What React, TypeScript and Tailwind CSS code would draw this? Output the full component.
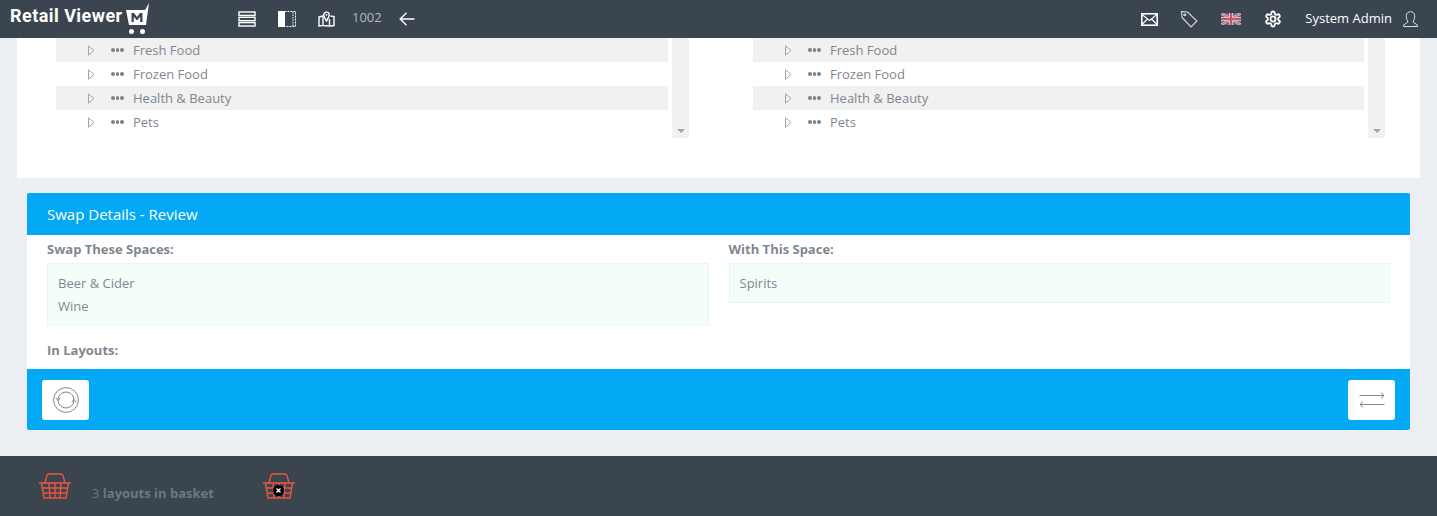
import React from 'react';

const treeItems = ['Fresh Food', 'Frozen Food', 'Health & Beauty', 'Pets'];

const TreeColumn: React.FC<{ ml: string; w: string }> = ({ ml, w }) => (
  <div className={`flex ${ml}`}>
    <div className={`${w} h-[96px]`}>
      {treeItems.map((item, i) => (
        <div key={item} className={`h-6 flex items-center pl-[32px] ${i % 2 === 0 ? 'bg-[#f1f1f1]' : 'bg-white'}`}>
          <svg width="7" height="11" viewBox="0 0 7 11" className="shrink-0">
            <path d="M0.5 0.8 L6 5.5 L0.5 10.2 Z" fill="none" stroke="#a3a3a3" strokeWidth="1" />
          </svg>
          <span className="ml-[16px] flex gap-[1px] shrink-0">
            <i className="block w-[3.5px] h-[3.5px] rounded-full bg-[#7b8089]" />
            <i className="block w-[3.5px] h-[3.5px] rounded-full bg-[#7b8089]" />
            <i className="block w-[3.5px] h-[3.5px] rounded-full bg-[#7b8089]" />
          </span>
          <span className="ml-[9.5px] pt-[2px] text-[13px] text-[#7f8790]">{item}</span>
        </div>
      ))}
    </div>
    <div className="ml-1 w-[17px] h-[100px] bg-[#f1f1f1] flex items-end justify-center pb-[5px]">
      <div className="w-0 h-0 border-x-[4px] border-x-transparent border-t-[4px] border-t-[#a3a3a3]" />
    </div>
  </div>
);

const Basket: React.FC<{ remove?: boolean }> = ({ remove }) => (
  <span className="relative block w-8 h-[26px]">
    <svg width="32" height="26" viewBox="0 0 32 26" fill="none" stroke="#ea5440" strokeWidth="1.4">
      <path d="M6 10 L8 2.5 Q8.4 1 10 1 H22 Q23.6 1 24 2.5 L26 10" />
      <path d="M0 10 H32" strokeWidth="1.6" />
      <path d="M2.5 10 L5 25 H27 L29.5 10" strokeWidth="1.5" />
      <path d="M3.3 15 H28.7 M4.2 20 H27.8 M10 10 L11 25 M16 10 V25 M22 10 L21 25" />
    </svg>
    {remove && (
      <span className="absolute left-[10px] top-[12px] w-[11px] h-[11px] rounded-full bg-black flex items-center justify-center">
        <svg width="5" height="5" viewBox="0 0 5 5" stroke="#fff" strokeWidth="1.4">
          <path d="M0.5 0.5 L4.5 4.5 M4.5 0.5 L0.5 4.5" />
        </svg>
      </span>
    )}
  </span>
);

export default function App() {
  return (
    <div className="w-[1437px] h-[516px] overflow-hidden bg-[#ebeef3] font-['Open_Sans',sans-serif] flex flex-col">
      <header className="h-[38px] shrink-0 bg-[#3a4550] flex items-center text-white">
        <div className="relative w-[150px] ml-[10px] h-[38px] flex items-center">
          <span className="font-['Roboto',sans-serif] text-[18px] font-bold leading-none whitespace-nowrap tracking-[0.45px] -mt-[6px]">Retail Viewer</span>
          <svg className="absolute left-[115px] top-[2px]" width="26" height="33" viewBox="0 0 26 33">
            <path d="M1 8 H20 L24 1 L21 23 H4 Z" fill="#fff" />
            <path d="M6.5 20 V11 H9 L12 15 L15 11 H17.5 V20 H15.2 V14.8 L12 18.5 L8.8 14.8 V20 Z" fill="#3a4550" />
            <circle cx="6.5" cy="29.5" r="2.5" fill="#fff" />
            <circle cx="17.5" cy="29.5" r="2.5" fill="#fff" />
          </svg>
        </div>
        <div className="ml-[78px] flex items-center">
          <svg width="18" height="16" viewBox="0 0 18 16" fill="none" stroke="#fff" strokeWidth="1.4">
            <rect x="1" y="1" width="16" height="3.4" />
            <rect x="1" y="6.3" width="16" height="3.4" />
            <rect x="1" y="11.6" width="16" height="3.4" />
          </svg>
          <svg className="ml-[22px]" width="18" height="16" viewBox="0 0 18 16" fill="none" stroke="#fff" strokeWidth="1">
            <rect x="0.5" y="0.5" width="6" height="15" fill="#fff" />
            <rect x="6.5" y="0.5" width="11" height="15" strokeDasharray="2 1" />
            <path d="M15 1 V15" strokeDasharray="1.5 1" />
          </svg>
          <svg className="ml-[22px]" width="17" height="16" viewBox="0 0 17 16" fill="none" stroke="#fff" strokeWidth="1.4">
            <path d="M1 6 L5 5 V14.5 L1 15 Z M5 14.5 L11.5 15 V8 M11.5 15 L16 14.5 V5.5 L12.5 5" />
            <path d="M8.5 10 C6.5 7 5.8 5.5 5.8 3.8 A2.7 2.7 0 0 1 11.2 3.8 C11.2 5.5 10.5 7 8.5 10 Z" />
            <circle cx="8.5" cy="3.8" r="0.9" fill="#fff" stroke="none" />
          </svg>
          <span className="ml-[17px] text-[13px] text-[#b4b9bf] -mt-[2px]">1002</span>
          <svg className="ml-[17px]" width="16" height="14" viewBox="0 0 16 14" fill="none" stroke="#fff" strokeWidth="1.4">
            <path d="M15.5 7 H1.2 M7.5 0.8 L1.2 7 L7.5 13.2" />
          </svg>
        </div>
        <div className="ml-auto flex items-center pr-[19px]">
          <svg width="17" height="13" viewBox="0 0 17 13" fill="none" stroke="#fff">
            <rect x="0.8" y="0.8" width="15.4" height="11.4" strokeWidth="1.6" />
            <path d="M1 1.5 L8.5 7.5 L16 1.5 M1 11.5 L6.5 6 M16 11.5 L10.5 6" strokeWidth="1.1" />
          </svg>
          <svg className="ml-[22px]" width="18" height="18" viewBox="0 0 18 18" fill="none" stroke="#d9dcdf" strokeWidth="1.1">
            <path d="M1.5 1.5 L7.5 2 L17 11 L11 17 L2 7.5 Z" />
            <circle cx="4.8" cy="4.8" r="1" />
          </svg>
          <svg className="ml-[23px]" width="20" height="12" viewBox="0 0 20 12">
            <rect width="20" height="12" fill="#5a6794" />
            <path d="M0 0 L20 12 M20 0 L0 12" stroke="#d8c9d2" strokeWidth="2.4" />
            <path d="M0 0 L20 12 M20 0 L0 12" stroke="#c9535f" strokeWidth="1" />
            <path d="M10 0 V12 M0 6 H20" stroke="#e3d6dc" strokeWidth="4.2" />
            <path d="M10 0 V12 M0 6 H20" stroke="#c9535f" strokeWidth="2.4" />
          </svg>
          <svg className="ml-[23px]" width="18" height="18" viewBox="0 0 24 24" fill="none" stroke="#fff" strokeWidth="2.4">
            <path d="M12.22 2h-.44a2 2 0 0 0-2 2v.18a2 2 0 0 1-1 1.73l-.43.25a2 2 0 0 1-2 0l-.15-.08a2 2 0 0 0-2.73.73l-.22.38a2 2 0 0 0 .73 2.73l.15.1a2 2 0 0 1 1 1.72v.51a2 2 0 0 1-1 1.74l-.15.09a2 2 0 0 0-.73 2.73l.22.38a2 2 0 0 0 2.73.73l.15-.08a2 2 0 0 1 2 0l.43.25a2 2 0 0 1 1 1.73V20a2 2 0 0 0 2 2h.44a2 2 0 0 0 2-2v-.18a2 2 0 0 1 1-1.73l.43-.25a2 2 0 0 1 2 0l.15.08a2 2 0 0 0 2.73-.73l.22-.39a2 2 0 0 0-.73-2.73l-.15-.08a2 2 0 0 1-1-1.74v-.5a2 2 0 0 1 1-1.74l.15-.09a2 2 0 0 0 .73-2.73l-.22-.38a2 2 0 0 0-2.73-.73l-.15.08a2 2 0 0 1-2 0l-.43-.25a2 2 0 0 1-1-1.73V4a2 2 0 0 0-2-2z" />
            <circle cx="12" cy="12" r="3.4" />
          </svg>
          <span className="ml-[23px] text-[13px] text-white">System Admin</span>
          <svg className="ml-[11px]" width="15" height="16" viewBox="0 0 16 17" fill="none" stroke="#e6e8ea" strokeWidth="1">
            <path d="M5 10.5 C3.5 8.5 3.5 6.5 3.5 5 A4.5 4.3 0 0 1 12.5 5 C12.5 6.5 12.5 8.5 11 10.5 L11 12 L15.5 15 V16.5 H0.5 V15 L5 12 Z" />
          </svg>
        </div>
      </header>

      <section className="mx-[17px] w-[1403px] h-[140px] shrink-0 bg-white flex">
        <TreeColumn ml="ml-[39px]" w="w-[612px]" />
        <TreeColumn ml="ml-[64px]" w="w-[611px]" />
      </section>

      <section className="mt-[15px] mx-[27px] w-[1383px] h-[237px] shrink-0 rounded-[2px] bg-white flex flex-col overflow-hidden">
        <div className="h-[42px] shrink-0 bg-[#03a9f4] flex items-center px-5 text-[15px] text-white">Swap Details - Review</div>
        <div className="flex-1 px-5 text-[13px] text-[#7f8790]">
          <div className="grid grid-cols-2 gap-x-5 items-start">
            <div>
              <div className="h-[28px] pt-[2px] flex items-center font-bold">Swap These Spaces:</div>
              <div className="h-[63px] border border-[#eef4f0] bg-[#f4fef9] px-[10px] pt-[8px]">
                <div className="leading-[23px]">Beer &amp; Cider</div>
                <div className="leading-[23px]">Wine</div>
              </div>
            </div>
            <div>
              <div className="h-[28px] pt-[2px] flex items-center font-bold">With This Space:</div>
              <div className="h-[40px] border border-[#eef4f0] bg-[#f4fef9] px-[10px] pt-[8px] leading-[23px]">Spirits</div>
            </div>
          </div>
          <div className="mt-[15px] font-bold leading-[18px]">In Layouts:</div>
        </div>
        <div className="h-[61px] shrink-0 bg-[#03a9f4] flex items-center justify-between px-[15px]">
          <button className="w-[47px] h-10 rounded-[3px] bg-white flex items-center justify-center">
            <svg width="26" height="26" viewBox="0 0 26 26" fill="none" stroke="#7f8790" strokeWidth="1">
              <circle cx="13" cy="13" r="12.4" />
              <path d="M5 13 A8 8 0 0 1 21 13 M21 13 A8 8 0 0 1 5 13" />
              <path d="M2.8 10.8 L5 13.5 L7.2 10.8 M18.8 15.2 L21 12.5 L23.2 15.2" />
            </svg>
          </button>
          <button className="w-[47px] h-10 rounded-[3px] bg-white flex items-center justify-center">
            <svg width="26" height="16" viewBox="0 0 26 16" fill="none" stroke="#7f8790" strokeWidth="1">
              <path d="M0.5 3.5 H25 M22 0.8 L25 3.5 L22 6.2" />
              <path d="M25.5 12.5 H1 M4 9.8 L1 12.5 L4 15.2" />
            </svg>
          </button>
        </div>
      </section>

      <footer className="mt-[26px] h-[60px] shrink-0 bg-[#3a4550] flex items-center pl-[39px]">
        <Basket />
        <span className="ml-[21px] mt-[15px] text-[13px] text-[#6d7883]">3 <b>layouts in basket</b></span>
        <span className="ml-[49px]"><Basket remove /></span>
      </footer>
    </div>
  );
}
